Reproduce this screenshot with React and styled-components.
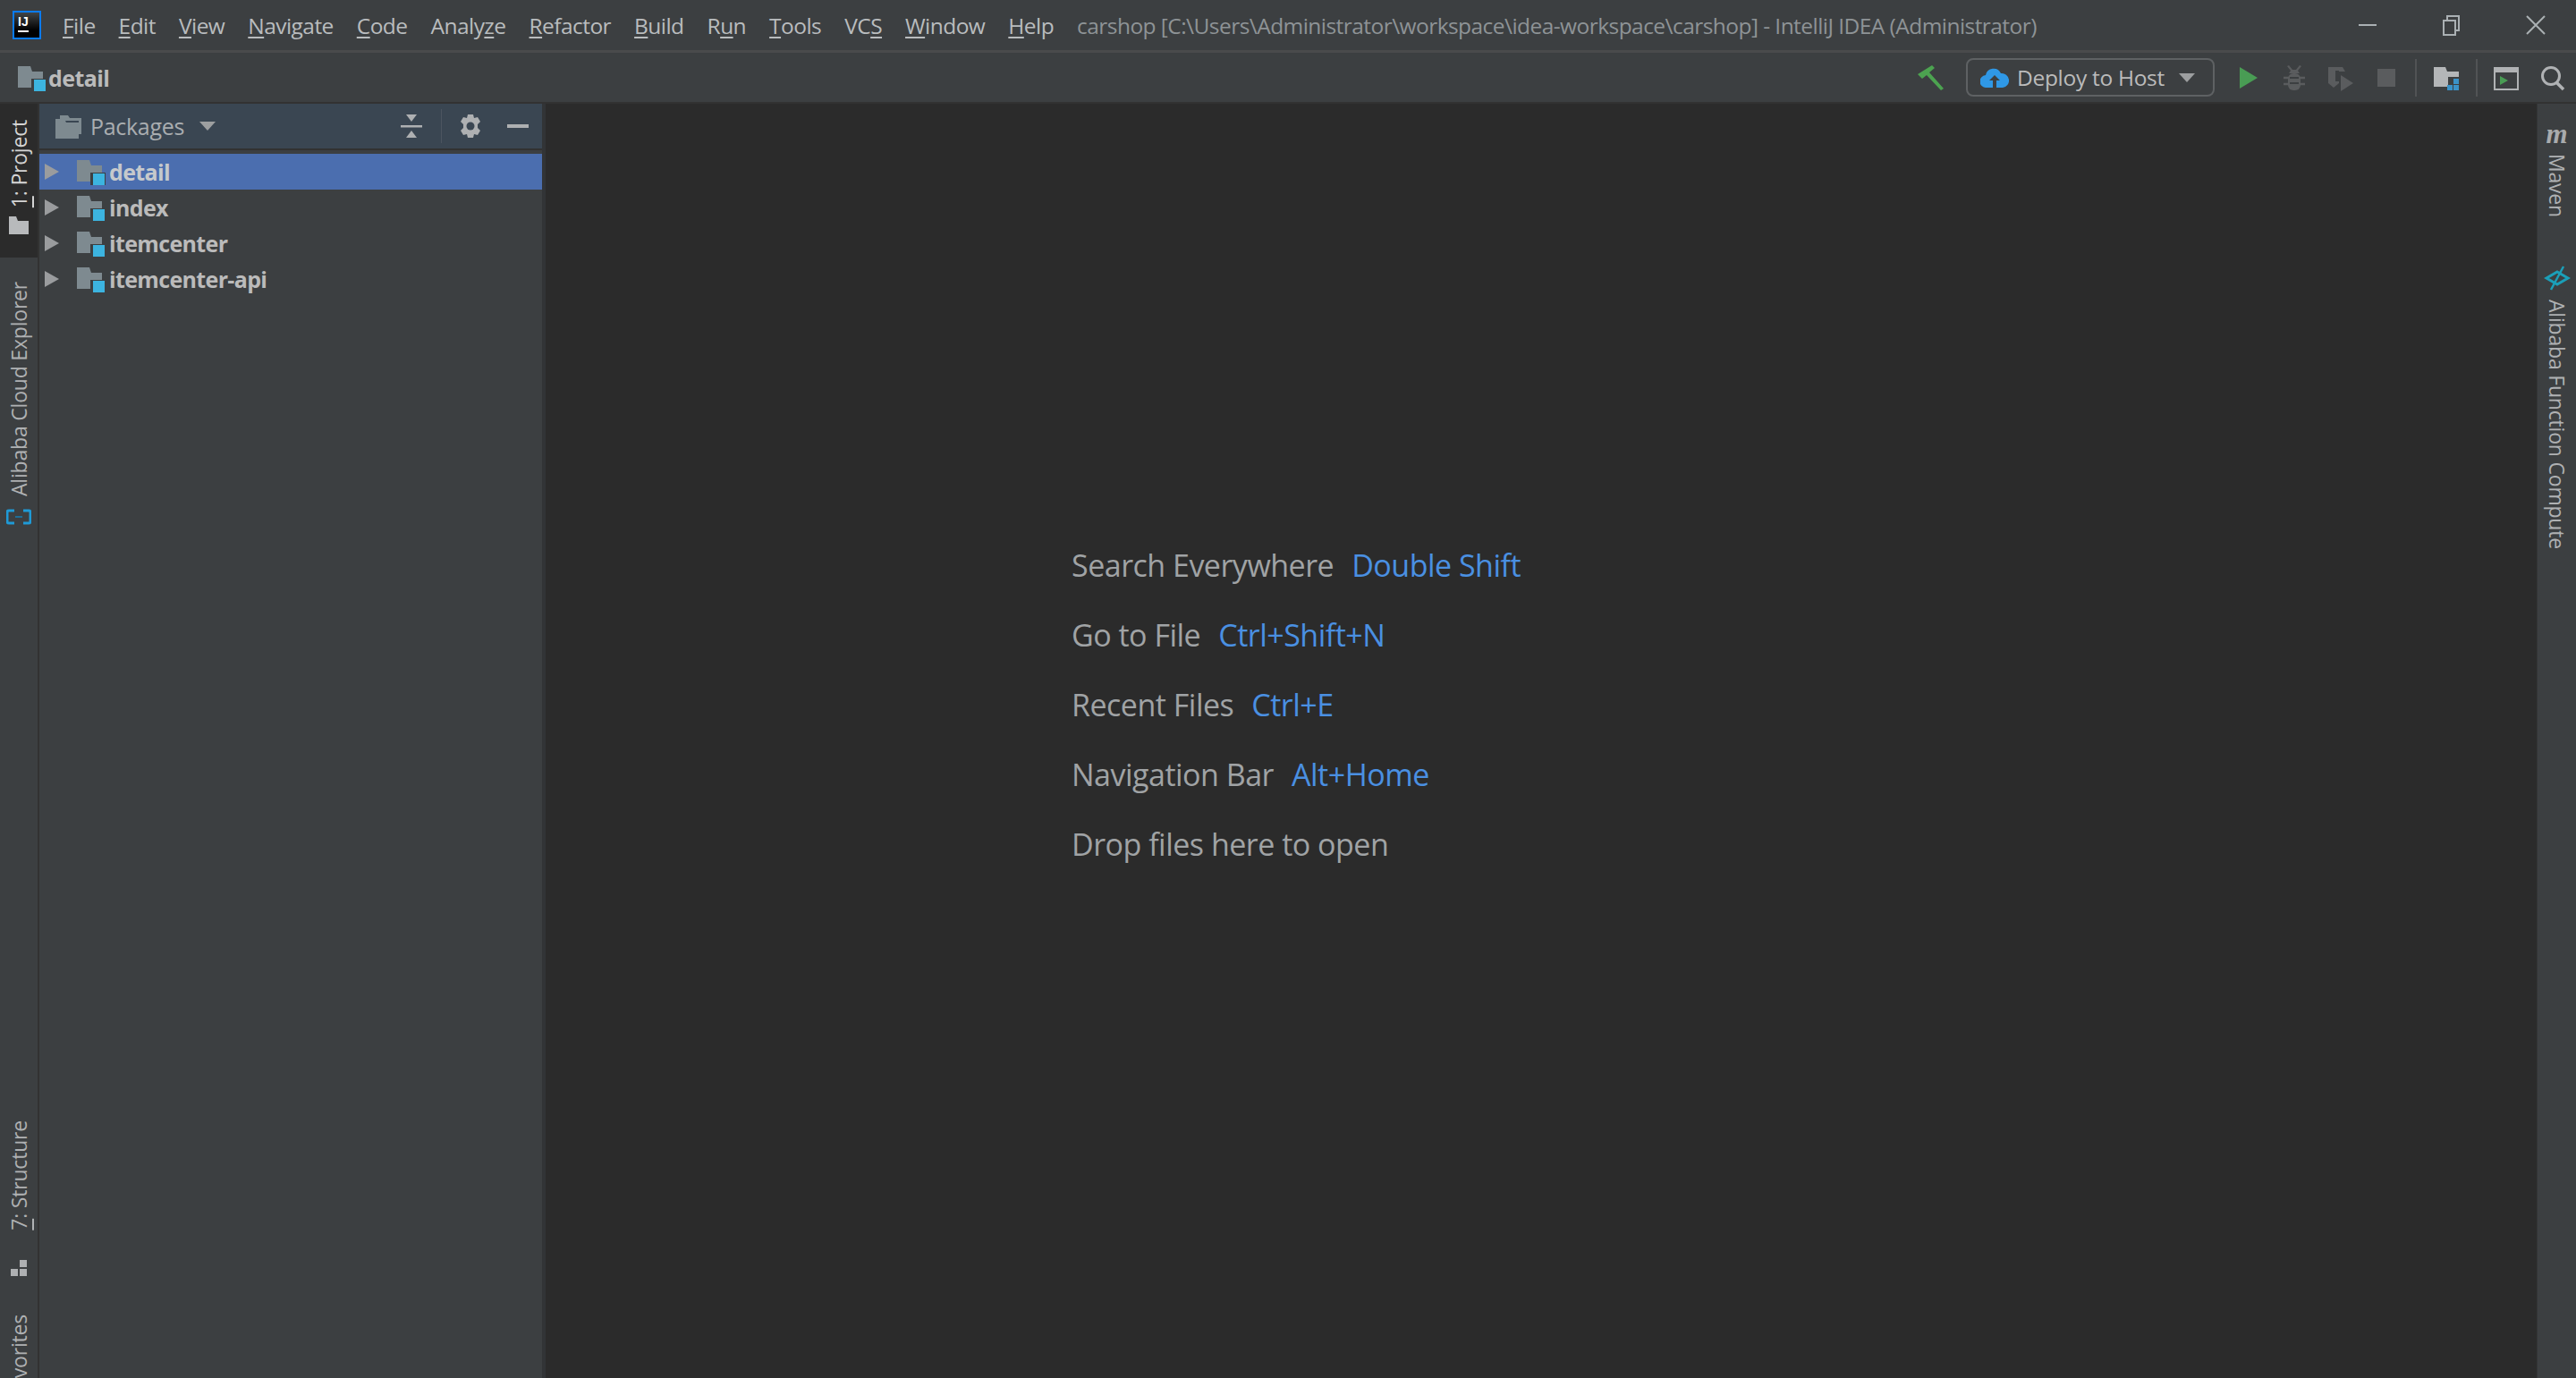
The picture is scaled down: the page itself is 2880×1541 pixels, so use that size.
import React from "react";
import styled, { createGlobalStyle } from "styled-components";

const Global = createGlobalStyle`
  html, body { margin: 0; padding: 0; background: #2b2b2b; }
  body { font-family: "Open Sans", "Noto Sans", sans-serif; color: #bbbbbb; }
  #root { height: 1541px; overflow: hidden; }
`;

const Page = styled.div`
  display: flex;
  flex-direction: column;
  width: 2880px;
  height: 1541px;
  overflow: hidden;
  background: #3c3f41;
`;

const TitleBar = styled.div`
  display: flex;
  align-items: center;
  height: 56px;
  flex: none;
  padding-left: 14px;
  border-bottom: 3px solid #4a4b4c;
  box-sizing: content-box;
`;

const Logo = styled.svg`
  width: 32px;
  height: 32px;
  flex: none;
  margin-right: 24px;
`;

const Menu = styled.nav`
  display: flex;
  gap: 26px;
  font-size: 24.5px;
  letter-spacing: -0.55px;
  color: #b9bcbe;
  & u { text-decoration-thickness: 2px; text-underline-offset: 3px; }
`;

const WindowTitle = styled.div`
  margin-left: 26px;
  font-size: 24.5px;
  letter-spacing: -0.55px;
  color: #8e9396;
  white-space: nowrap;
`;

const WindowButtons = styled.div`
  display: flex;
  align-items: center;
  margin-left: auto;
`;

const WinBtn = styled.svg`
  width: 24px;
  height: 24px;
  margin-right: ${(p) => p.$mr}px;
  fill: none;
  stroke: #aab0b3;
  stroke-width: 2;
`;

const NavBar = styled.div`
  display: flex;
  align-items: center;
  height: 55px;
  flex: none;
  padding-left: 20px;
  border-bottom: 2px solid #323232;
`;

const Crumb = styled.div`
  display: flex;
  align-items: center;
  gap: 2px;
  font-size: 25px;
  font-weight: 700;
  letter-spacing: -0.6px;
  color: #bbbbbb;
`;

const Toolbar = styled.div`
  display: flex;
  align-items: center;
  margin-left: auto;
  padding-right: 12px;
`;

const ToolIcon = styled.svg`
  flex: none;
  width: ${(p) => p.$w}px;
  height: 30px;
  margin-left: ${(p) => p.$ml}px;
`;

const ToolSep = styled.div`
  flex: none;
  width: 2px;
  height: 42px;
  background: #515355;
  margin-left: ${(p) => p.$ml}px;
`;

const DeployBox = styled.div`
  display: flex;
  align-items: center;
  box-sizing: border-box;
  width: 278px;
  height: 43px;
  margin-left: 23px;
  padding: 0 14px;
  border: 2px solid #5e6163;
  border-radius: 8px;
  font-size: 24.5px;
  letter-spacing: -0.3px;
  color: #bbbbbb;
  white-space: nowrap;
`;

const DropArrow = styled.i`
  flex: none;
  display: block;
  width: 0;
  height: 0;
  border-left: 9px solid transparent;
  border-right: 9px solid transparent;
  border-top: 10px solid #9d9fa0;
  margin-left: ${(p) => p.$ml}px;
`;

const Main = styled.div`
  display: flex;
  flex: 1;
  min-height: 0;
`;

const Strip = styled.aside`
  display: flex;
  flex-direction: column;
  flex: none;
  width: 42px;
  overflow: hidden;
`;

const LeftStrip = styled(Strip)`
  border-right: 2px solid #323232;
`;

const RightStrip = styled(Strip)`
  width: 44px;
  border-left: 1px solid #333537;
  padding-top: 24px;
  box-sizing: border-box;
`;

const VTab = styled.div`
  display: flex;
  flex-direction: column;
  align-items: center;
  flex: none;
  background: ${(p) => (p.$active ? "#2b2b2b" : "transparent")};
  color: ${(p) => (p.$active ? "#d4d4d4" : "#afb1b3")};
  font-size: 23px;
  letter-spacing: -0.2px;
  padding-top: ${(p) => p.$pt || 0}px;
  padding-bottom: ${(p) => p.$pb || 0}px;
  margin-top: ${(p) => p.$mt || 0}px;
  & u { text-underline-offset: 3px; }
`;

const VText = styled.span`
  display: block;
  writing-mode: vertical-rl;
  transform: ${(p) => (p.$down ? "none" : "rotate(180deg)")};
  line-height: 30px;
  white-space: nowrap;
`;

const MavenMark = styled.span`
  font: italic 700 31px/20px "Liberation Serif", serif;
  color: #a9abad;
  margin-bottom: 12px;
`;

const Panel = styled.section`
  display: flex;
  flex-direction: column;
  flex: none;
  width: 562px;
  background: #3c3f41;
  border-right: 4px solid #323436;
`;

const PanelHeader = styled.header`
  display: flex;
  align-items: center;
  box-sizing: border-box;
  height: 52px;
  flex: none;
  padding-left: 18px;
  background: #3a4652;
  border-bottom: 2px solid #323232;
  font-size: 25px;
  letter-spacing: -0.3px;
  color: #a9adb0;
`;

const PanelIcons = styled.div`
  display: flex;
  align-items: center;
  margin-left: auto;
  padding-right: 14px;
`;

const HeadIcon = styled.svg`
  flex: none;
  width: 26px;
  height: 28px;
  margin-left: ${(p) => p.$ml}px;
`;

const HeadSep = styled.div`
  width: 1px;
  height: 38px;
  background: #4c5560;
  margin-left: 20px;
`;

const Tree = styled.div`
  padding-top: 4px;
  border-top: 0;
`;

const Row = styled.div`
  display: flex;
  align-items: center;
  height: 40px;
  padding-left: 6px;
  background: ${(p) => (p.$selected ? "#4b6eaf" : "transparent")};
  font-size: 25px;
  font-weight: 700;
  letter-spacing: -0.65px;
  color: ${(p) => (p.$selected ? "#c6c9cc" : "#bbbbbb")};
`;

const RowArrow = styled.i`
  display: block;
  flex: none;
  width: 0;
  height: 0;
  border-top: 9px solid transparent;
  border-bottom: 9px solid transparent;
  border-left: 16px solid #9a9c9e;
  margin-right: 20px;
`;

const Editor = styled.main`
  flex: 1;
  min-width: 0;
  display: flex;
  flex-direction: column;
  gap: 32px;
  padding: 493px 0 0 588px;
  background: #2b2b2b;
`;

const Hint = styled.div`
  display: flex;
  gap: 20px;
  font-size: 34px;
  line-height: 46px;
  letter-spacing: -0.5px;
  color: #a0a3a5;
`;

const Shortcut = styled.span`
  color: #4a90e2;
`;

const PackageFolder = () => (
  <svg width="32" height="30" viewBox="0 0 32 30" style={{ flex: "none" }}>
    <path d="M0 2h14l2 6h12v18H0z" fill="#7e8a90" />
    <rect x="15" y="16" width="17" height="14" fill="#3c3f41" />
    <rect x="18" y="17" width="13" height="13" fill="#3cb4e0" />
  </svg>
);

const MENU = [
  ["F", "ile"],
  ["E", "dit"],
  ["V", "iew"],
  ["N", "avigate"],
  ["C", "ode"],
  ["", "Analy", "z", "e"],
  ["R", "efactor"],
  ["B", "uild"],
  ["", "R", "u", "n"],
  ["T", "ools"],
  ["", "VC", "S", ""],
  ["W", "indow"],
  ["H", "elp"],
];

const HINTS = [
  ["Search Everywhere", "Double Shift"],
  ["Go to File", "Ctrl+Shift+N"],
  ["Recent Files", "Ctrl+E"],
  ["Navigation Bar", "Alt+Home"],
  ["Drop files here to open", null],
];

const MODULES = ["detail", "index", "itemcenter", "itemcenter-api"];

export default function App() {
  return (
    <Page>
      <Global />
      <TitleBar>
        <Logo viewBox="0 0 32 32">
          <defs>
            <linearGradient id="ij" x1="0" y1="0" x2="0" y2="1">
              <stop offset="0" stopColor="#44484a" />
              <stop offset="0.7" stopColor="#000" />
            </linearGradient>
          </defs>
          <rect x="1" y="1" width="30" height="30" fill="url(#ij)" stroke="#0a7bf0" strokeWidth="2" />
          <text x="6" y="17" fontFamily="Liberation Sans" fontWeight="700" fontSize="14" fill="#fff">IJ</text>
          <rect x="6" y="22" width="12" height="2" fill="#fff" />
        </Logo>
        <Menu>
          {MENU.map(([u, rest, u2, end]) => (
            <span key={u + rest}>
              {u ? <u>{u}</u> : null}
              {rest}
              {u2 ? <u>{u2}</u> : null}
              {end}
            </span>
          ))}
        </Menu>
        <WindowTitle>carshop [C:\Users\Administrator\workspace\idea-workspace\carshop] - IntelliJ IDEA (Administrator)</WindowTitle>
        <WindowButtons>
          <WinBtn viewBox="0 0 24 24" $mr={70}>
            <path d="M2 12h20" />
          </WinBtn>
          <WinBtn viewBox="0 0 24 24" $mr={70}>
            <path d="M3 7h13v16H3zM7 7V2h13v16h-4" />
          </WinBtn>
          <WinBtn viewBox="0 0 24 24" $mr={33}>
            <path d="M2 2l20 20M22 2L2 22" />
          </WinBtn>
        </WindowButtons>
      </TitleBar>

      <NavBar>
        <Crumb>
          <PackageFolder />
          detail
        </Crumb>
        <Toolbar>
          <ToolIcon viewBox="0 0 32 30" $w={32} $ml={0}>
            <path d="M1 11L17 1l3 3-6 5 16 18-3 2L11 12l-5 4z" fill="#4ca350" />
          </ToolIcon>
          <DeployBox>
            <svg width="32" height="22" viewBox="0 0 32 22" style={{ flex: "none", marginRight: 9 }}>
              <path d="M7 22a7 7 0 0 1-1-14 9 9 0 0 1 17-2 8 8 0 0 1 2 16z" fill="#2f98e6" />
              <path d="M16 8l6 6h-4v8h-4v-8h-4z" fill="#3c3f41" />
            </svg>
            Deploy to Host
            <DropArrow $ml={16} />
          </DeployBox>
          <ToolIcon viewBox="0 0 22 30" $w={22} $ml={27}>
            <path d="M1 3l20 12L1 27z" fill="#499c54" />
          </ToolIcon>
          <ToolIcon viewBox="0 0 26 30" $w={26} $ml={27}>
            <path d="M7 1l4 5h4l4-5 2 1-4 5 2 3H7l2-3-4-5z" fill="#5a5c5e" />
            <rect x="6" y="10" width="14" height="19" rx="6" fill="#5a5c5e" />
            <path d="M1 15h24M1 22h24" stroke="#5a5c5e" strokeWidth="2.5" />
            <path d="M8 15h10M8 21h10" stroke="#3c3f41" strokeWidth="2" />
          </ToolIcon>
          <ToolIcon viewBox="0 0 30 30" $w={30} $ml={24}>
            <path d="M1 3h12v18l-6 5-6-5z" fill="#5a5c5e" />
            <path d="M9 7h4v12H9z" fill="#3c3f41" />
            <path d="M15 12l14 9-14 9z" fill="#5a5c5e" />
            <path d="M13 3h4l3 5h-7z" fill="#5a5c5e" />
          </ToolIcon>
          <ToolIcon viewBox="0 0 20 30" $w={20} $ml={26}>
            <rect y="5" width="20" height="20" fill="#5a5c5e" />
          </ToolIcon>
          <ToolSep $ml={22} />
          <ToolIcon viewBox="0 0 28 30" $w={28} $ml={19}>
            <path d="M0 3h13l2 5h13v6H16v11H0z" fill="#b4b6b8" />
            <path d="M22 16h6v6h-6zM15 23h6v6h-6zM22 23h6v6h-6z" fill="#3a92c8" />
          </ToolIcon>
          <ToolSep $ml={19} />
          <ToolIcon viewBox="0 0 28 30" $w={28} $ml={18}>
            <path d="M1 4h26v24H1z" fill="none" stroke="#b0b2b4" strokeWidth="2" />
            <rect x="1" y="4" width="26" height="5" fill="#b0b2b4" />
            <path d="M7 13l9 5-9 5z" fill="#499c54" />
          </ToolIcon>
          <ToolIcon viewBox="0 0 28 30" $w={28} $ml={24}>
            <circle cx="12" cy="13" r="9.5" fill="none" stroke="#b0b2b4" strokeWidth="3" />
            <path d="M18 20l8 8" stroke="#b0b2b4" strokeWidth="3.5" />
          </ToolIcon>
        </Toolbar>
      </NavBar>

      <Main>
        <LeftStrip>
          <VTab $active $pt={18} $pb={26}>
            <VText>
              <u>1</u>: Project
            </VText>
            <svg width="22" height="20" viewBox="0 0 22 20" style={{ marginTop: 10 }}>
              <path d="M0 0h8l2 5h12v15H0z" fill="#b8babc" />
            </svg>
          </VTab>
          <VTab $mt={27}>
            <VText>Alibaba Cloud Explorer</VText>
            <svg width="28" height="18" viewBox="0 0 28 18" style={{ marginTop: 14 }}>
              <path d="M9 2H3Q1 2 1 4v10q0 2 2 2h6M19 2h6q2 0 2 2v10q0 2-2 2h-6" fill="none" stroke="#1f9ad6" strokeWidth="3" />
              <rect x="10" y="8" width="8" height="2" fill="#1f6d96" />
            </svg>
          </VTab>
          <VTab $mt={666}>
            <VText>
              <u>7</u>: Structure
            </VText>
            <svg width="20" height="20" viewBox="0 0 20 20" style={{ marginTop: 32 }}>
              <path d="M11 1h8v8h-8zM1 11h8v8H1zM11 11h8v8h-8z" fill="#aeb0b2" />
            </svg>
          </VTab>
          <VTab $mt={42}>
            <VText>2: Favorites</VText>
          </VTab>
        </LeftStrip>

        <Panel>
          <PanelHeader>
            <svg width="30" height="28" viewBox="0 0 30 28" style={{ flex: "none", marginRight: 9 }}>
              <path d="M5 2h9l2 3h13v18h-3V8H5z" fill="#7e8a90" />
              <path d="M0 6h10l2 4h14v18H0z" fill="#7e8a90" />
            </svg>
            Packages
            <DropArrow $ml={17} />
            <PanelIcons>
              <HeadIcon viewBox="0 0 26 28">
                <path d="M7 1h12l-6 8zM7 27h12l-6-8z" fill="#aeb0b2" />
                <rect x="1" y="13" width="24" height="2.5" fill="#aeb0b2" />
              </HeadIcon>
              <HeadSep />
              <HeadIcon viewBox="0 0 26 28" $ml={19}>
                <path d="M10 1h6l1 4 4-1 3 5-3 3v4l3 3-3 5-4-1-1 4h-6l-1-4-4 1-3-5 3-3v-4l-3-3 3-5 4 1z" fill="#aeb0b2" />
                <circle cx="13" cy="14" r="4.5" fill="#3a4652" />
              </HeadIcon>
              <HeadIcon viewBox="0 0 26 28" $ml={27}>
                <rect x="1" y="12" width="24" height="4" fill="#aeb0b2" />
              </HeadIcon>
            </PanelIcons>
          </PanelHeader>
          <Tree>
            {MODULES.map((name, i) => (
              <Row key={name} $selected={i === 0}>
                <RowArrow />
                <PackageFolder />
                <span style={{ marginLeft: 4 }}>{name}</span>
              </Row>
            ))}
          </Tree>
        </Panel>

        <Editor>
          {HINTS.map(([label, key]) => (
            <Hint key={label}>
              <span>{label}</span>
              {key ? <Shortcut>{key}</Shortcut> : null}
            </Hint>
          ))}
        </Editor>

        <RightStrip>
          <VTab>
            <MavenMark>m</MavenMark>
            <VText $down>Maven</VText>
          </VTab>
          <VTab $mt={54}>
            <svg width="30" height="28" viewBox="0 0 30 28" style={{ marginBottom: 10 }}>
              <path d="M15 7l12 7-12 7-12-7z" fill="none" stroke="#1b9fb8" strokeWidth="3" />
              <path d="M22 1L8 27" stroke="#1b9fb8" strokeWidth="2.5" />
            </svg>
            <VText $down>Alibaba Function Compute</VText>
          </VTab>
        </RightStrip>
      </Main>
    </Page>
  );
}
